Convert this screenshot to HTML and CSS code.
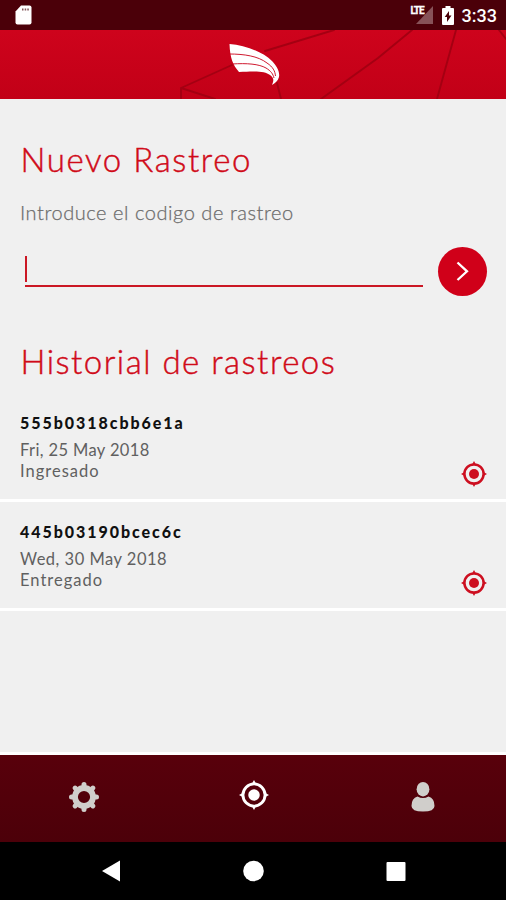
FILE: index.html
```html
<!DOCTYPE html>
<html lang="es">
<head>
<meta charset="utf-8">
<title>Nuevo Rastreo</title>
<link rel="stylesheet" href="styles.css">
</head>
<body>
<svg class="defs" width="0" height="0">
  <symbol id="target" viewBox="0 0 26 26">
    <circle cx="13" cy="13" r="9.6" fill="none" stroke="currentColor" stroke-width="2.5"/>
    <circle cx="13" cy="13" r="5" fill="currentColor"/>
    <path d="M13 0l2.200 4h-4.400zM13 26l2.200-4h-4.400zM0 13l4-2.200v4.400zM26 13l-4-2.200v4.400z" fill="currentColor"/>
  </symbol>
</svg>
<div class="status">
  <svg class="sd" width="17" height="20" viewBox="0 0 17 20"><path d="M6 .5h8.500q2 0 2 2v15q0 2-2 2h-12q-2 0-2-2v-11z" fill="#fff"/><path d="M7 3.500h1.500v2H7zM9.700 3.500h1.500v2H9.700zM12.300 3.500h1.500v2h-1.500z" fill="#82565a"/></svg>
  <div class="signal"><span class="lte">LTE</span><svg width="17" height="18" viewBox="0 0 17 18"><path d="M17 0v18H0z" fill="#875258"/></svg></div>
  <svg class="battery" width="12" height="19" viewBox="0 0 12 19"><path d="M3.500 0h5v2H11q1 0 1 1v15q0 1-1 1H1q-1 0-1-1V3q0-1 1-1h2.500z" fill="#fff"/><path d="M7 5v4.500h2.500L5 16v-5H2.700z" fill="#4b0009"/></svg>
  <span class="clock">3:33</span>
</div>
<header class="header">
  <svg width="506" height="69" viewBox="0 0 506 69">
    <g fill="none" stroke="#a40012" stroke-width="1.900" stroke-linecap="round">
      <path d="M181 69V58L232 35M181 58l34 11M265 21L334 0M321 69L378 28 412 0M437 69L456 0M499 0l7 9M277 53l4 16"/>
    </g>
    <path d="M229.500 14C245 15 263 22 272 31c5 5 8 11 7 16-1 4-4 6-7 8 2-5 2-7-2-10-5-4-15-4-31-3-6-7-9-14-9.500-28z" fill="#fff"/>
    <path d="M229 24c15 0 29 2 38 9 6 4 8 8 8.500 13M232 34c15-1 27 0 34 4 5 3 7 6 8 10" fill="none" stroke="#c90019" stroke-width=".9"/>
  </svg>
</header>
<main class="content">
  <h1 class="title new">Nuevo Rastreo</h1>
  <p class="hint">Introduce el codigo de rastreo</p>
  <div class="form">
    <div class="field"><span class="caret"></span></div>
    <div class="go"><svg width="48" height="48" viewBox="0 0 48 48"><path d="M19.500 15.500l9.500 8.800-9.500 8.700" fill="none" stroke="#fff" stroke-width="2.300"/></svg></div>
  </div>
  <h2 class="title history">Historial de rastreos</h2>
  <section class="list">
    <article class="row">
      <div><h3 class="code">555b0318cbb6e1a</h3><p class="date first">Fri, 25 May 2018</p><p class="state">Ingresado</p></div>
      <svg class="pin"><use href="#target"/></svg>
    </article>
    <article class="row">
      <div><h3 class="code second">445b03190bcec6c</h3><p class="date">Wed, 30 May 2018</p><p class="state">Entregado</p></div>
      <svg class="pin"><use href="#target"/></svg>
    </article>
  </section>
</main>
<nav class="tabs">
  <div class="tab"><svg width="30" height="30" viewBox="-15 -15 30 30"><circle r="9" fill="none" stroke="#d0cecb" stroke-width="5.800"/><path d="M0-12.500V-12M0 12.500V12M-12.500 0H-12M12.500 0H12M-8.900-8.900l.4.4M8.900 8.900l-.4-.4M-8.900 8.900l.4-.4M8.900-8.900l-.4.4" stroke="#d0cecb" stroke-width="5" stroke-linecap="round"/></svg></div>
  <div class="tab active"><svg width="30" height="30"><use href="#target"/></svg></div>
  <div class="tab"><svg width="24" height="30" viewBox="0 0 24 30"><ellipse cx="12" cy="7.200" rx="6.400" ry="7.200" fill="#d0cecb"/><path d="M6.500 14.500q5.500 3 11 0Q23.500 16 23.500 24q0 5.500-11.500 5.500T.5 24q0-8 6-9.500z" fill="#d0cecb"/></svg></div>
</nav>
<div class="keys">
  <svg width="506" height="58" viewBox="0 0 506 58" fill="#fff"><path d="M102 29l18-10.500v21z"/><circle cx="253.500" cy="29" r="10.300"/><rect x="386.500" y="20" width="19" height="19" rx="1"/></svg>
</div>
</body>
</html>
```
FILE: styles.css
```css
* { box-sizing: border-box; margin: 0; padding: 0; }
body { width: 506px; height: 900px; overflow: hidden; display: flex; flex-direction: column; background: #f0f0f0; font-family: Lato, "Open Sans", sans-serif; }
svg { display: block; flex: none; }
.defs { position: absolute; }
.status { height: 30px; flex: none; display: flex; align-items: flex-start; background: #4b0009; color: #fff; padding: 5px 9px 0 15px; }
.signal { margin-left: auto; display: flex; }
.signal svg { margin-top: 1px; margin-left: -8px; }
.lte { font: 700 10px/12px Roboto, sans-serif; letter-spacing: -1px; -webkit-text-stroke: .3px; }
.battery { margin: 1px 8px 0 9px; }
.clock { font: 500 18px/22px Roboto, sans-serif; }
.header { height: 69px; flex: none; background: linear-gradient(#ce031c, #c20017); }
.content { flex: 1; padding-top: 40px; }
.title { height: 40px; padding-left: 20.5px; font-size: 33px; line-height: 40px; font-weight: 300; color: #d00a18; white-space: nowrap; -webkit-text-stroke: .45px; }
.new { letter-spacing: 1.6px; }
.history { letter-spacing: 1.5px; margin-top: 45px; }
.hint { margin-top: 21px; padding-left: 20px; font-size: 20px; line-height: 24px; font-weight: 300; color: #6c6c6c; letter-spacing: .55px; white-space: nowrap; -webkit-text-stroke: .25px; }
.form { display: flex; margin: 23px 19px 0 25px; height: 49px; justify-content: space-between; }
.field { width: 398px; height: 40px; border-bottom: 2px solid #cb1724; padding-top: 9px; }
.caret { display: block; width: 2px; height: 26px; background: #cb1724; }
.go { width: 49px; height: 49px; border-radius: 50%; background: #d00019; }
.list { margin-top: 32px; }
.row { height: 109px; display: flex; justify-content: space-between; align-items: flex-end; padding: 0 19px 12px 20px; border-bottom: 3px solid #fff; }
.row:first-child { height: 89px; }
.row > div { height: 74px; }
.code { font-size: 16px; line-height: 20px; font-weight: 900; color: #111; letter-spacing: 1.95px; }
.date { margin-top: 7px; }
.date, .state { font-size: 16.5px; line-height: 21px; color: #606060; letter-spacing: .5px; }
.first { letter-spacing: .38px; }
.state { letter-spacing: 1px; }
.pin { width: 26px; height: 26px; color: #cd0f20; }
.tabs { height: 90px; flex: none; border-top: 3px solid #fff; background: linear-gradient(#58000b, #4c0009) padding-box; display: grid; grid-template-columns: repeat(3, 169.500px); justify-content: center; justify-items: center; padding-top: 27px; }
.active { color: #fff; margin: -2px 0 0 2px; }
.keys { height: 58px; flex: none; background: #000; }
```
